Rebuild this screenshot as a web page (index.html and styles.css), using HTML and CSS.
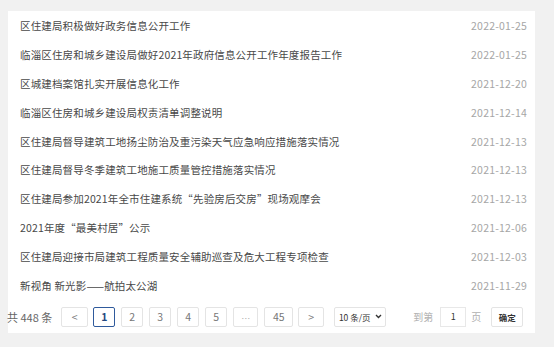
FILE: index.html
```html
<!DOCTYPE html>
<html>
<head>
  <title>信息公开</title>
  <link rel="stylesheet" href="styles.css">
</head>
<body>
  <div class="list-panel">
    <ul class="news-list">
      <li><a href="#">区住建局积极做好政务信息公开工作</a><span class="date">2022-01-25</span></li>
      <li><a href="#">临淄区住房和城乡建设局做好2021年政府信息公开工作年度报告工作</a><span class="date">2022-01-25</span></li>
      <li><a href="#">区城建档案馆扎实开展信息化工作</a><span class="date">2021-12-20</span></li>
      <li><a href="#">临淄区住房和城乡建设局权责清单调整说明</a><span class="date">2021-12-14</span></li>
      <li><a href="#">区住建局督导建筑工地扬尘防治及重污染天气应急响应措施落实情况</a><span class="date">2021-12-13</span></li>
      <li><a href="#">区住建局督导冬季建筑工地施工质量管控措施落实情况</a><span class="date">2021-12-13</span></li>
      <li><a href="#">区住建局参加2021年全市住建系统“先验房后交房”现场观摩会</a><span class="date">2021-12-13</span></li>
      <li><a href="#">2021年度“最美村居”公示</a><span class="date">2021-12-06</span></li>
      <li><a href="#">区住建局迎接市局建筑工程质量安全辅助巡查及危大工程专项检查</a><span class="date">2021-12-03</span></li>
      <li><a href="#">新视角 新光影——航拍太公湖</a><span class="date">2021-11-29</span></li>
    </ul>

    <div class="pager">
      <span class="total">共 448 条</span>
      <a class="page-btn prev" href="#">&lt;</a>
      <a class="page-btn active" href="#">1</a>
      <a class="page-btn" href="#">2</a>
      <a class="page-btn" href="#">3</a>
      <a class="page-btn" href="#">4</a>
      <a class="page-btn" href="#">5</a>
      <span class="page-btn more">…</span>
      <a class="page-btn wide" href="#">45</a>
      <a class="page-btn next" href="#">&gt;</a>
      <span class="page-size">10 条/页
        <svg width="7" height="5" viewBox="0 0 7 5"><path d="M1 1 L3.5 3.5 L6 1" fill="none" stroke="#333" stroke-width="1.4"/></svg>
      </span>
      <span class="jump-label">到第</span>
      <span class="jump-input">1</span>
      <span class="jump-unit">页</span>
      <span class="jump-btn">确定</span>
    </div>
  </div>
</body>
</html>
```

FILE: styles.css
```css
body {
  margin: 0;
  padding: 11px 19px 0 8px;
  background-color: #f1f1f1;
  font-family: "Noto Sans CJK SC", "Noto Sans", sans-serif;
  font-size: 10.5px;
  color: #444;
}
a {
  color: inherit;
  text-decoration: none;
}
.list-panel {
  background-color: #fff;
  padding: 0 8px 6px 0;
}
.news-list {
  list-style: none;
  margin: 0;
  padding: 0 0 0 12px;
}
.news-list li {
  display: flex;
  justify-content: space-between;
  align-items: center;
  height: 28.9px;
}
.news-list a {
  color: #484848;
  letter-spacing: 0.15px;
}
.date {
  color: #a6a6a6;
  font-size: 10.5px;
  letter-spacing: 0.2px;
}
.pager {
  display: flex;
  align-items: center;
  margin-top: 7px;
  height: 20px;
  color: #777;
}
.total {
  color: #666;
  font-size: 11px;
  margin-right: 9px;
  margin-left: -1px;
}
.page-btn {
  display: flex;
  align-items: center;
  justify-content: center;
  box-sizing: border-box;
  width: 22px;
  height: 20px;
  margin-right: 6px;
  border: 1px solid #e4e4e4;
  border-radius: 2px;
  background: #fff;
  color: #777;
  font-size: 10.5px;
}
.page-btn.prev {
  width: 27px;
  margin-right: 5px;
}
.page-btn.next {
  width: 26px;
  margin-right: 10px;
}
.page-btn.more {
  width: 25px;
  color: #aaa;
  font-size: 9px;
  padding-top: 3px;
}
.page-btn.wide {
  width: 29px;
  margin-right: 5px;
}
.page-btn.active {
  border-color: #2f5a9c;
  color: #24487f;
  font-weight: bold;
}
.page-size {
  display: flex;
  align-items: center;
  justify-content: center;
  gap: 4px;
  box-sizing: border-box;
  width: 52px;
  height: 20px;
  border: 1px solid #e4e4e4;
  border-radius: 2px;
  color: #333;
  font-size: 8.5px;
  margin-right: 27px;
}
.jump-label {
  color: #b0b0b0;
  font-size: 10px;
  margin-right: 7px;
}
.jump-input {
  display: flex;
  align-items: center;
  justify-content: center;
  box-sizing: border-box;
  width: 26px;
  height: 20px;
  border: 1px solid #e8e8e8;
  color: #333;
  font-size: 9px;
  margin-right: 5px;
}
.jump-unit {
  color: #b0b0b0;
  font-size: 10px;
  margin-right: 10px;
}
.jump-btn {
  display: flex;
  align-items: center;
  justify-content: center;
  box-sizing: border-box;
  width: 32px;
  height: 20px;
  border: 1px solid #e4e4e4;
  border-radius: 2px;
  color: #333;
  font-size: 8.5px;
  font-weight: bold;
}
```
